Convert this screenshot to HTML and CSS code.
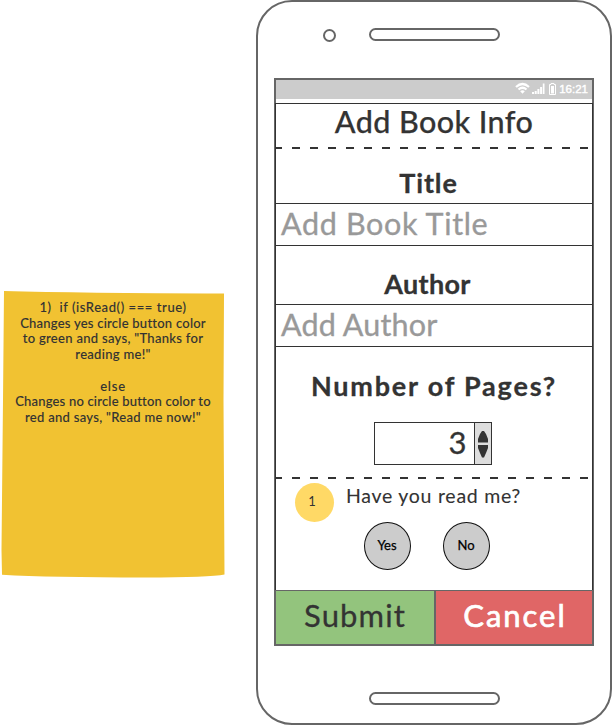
FILE: index.html
```html
<!DOCTYPE html>
<html lang="en">
<head>
<meta charset="utf-8">
<title>Add Book Info</title>
<link rel="stylesheet" href="styles.css">
</head>
<body>
<main class="board">
  <aside class="note">
    <svg class="paper" viewBox="0 0 225 290" aria-hidden="true"><path d="M4 1Q80 3 224 3.500L223.500 110L224.500 284.500Q210 287.500 145 287.500Q50 287.500 2 284.800L1.500 260L3 110Z" fill="#f1c232"/></svg>
    <div class="note-text">
      <p class="n1">1)&nbsp; if (isRead() === true)</p>
      <p class="n2">Changes yes circle button color</p>
      <p class="n3">to green and says, "Thanks for</p>
      <p class="n4">reading me!"</p>
      <p class="n5">else</p>
      <p class="n6">Changes no circle button color to</p>
      <p class="n7">red and says, "Read me now!"</p>
    </div>
  </aside>
  <section class="phone">
    <div class="top"><span class="camera"></span><span class="pill"></span></div>
    <div class="screen">
      <div class="status">
        <svg width="42" height="14" viewBox="0 0 42 14" fill="none" aria-hidden="true">
          <path d="M1 5Q7.500 -1 14 5M3.500 7.500Q7.500 4 11.500 7.500" stroke="#fff" stroke-width="2.200"/>
          <path d="M5.200 9.200Q7.500 7.300 9.800 9.200L7.500 11.700Z" fill="#fff"/>
          <path d="M17 10h2v2h-2zM19.700 9h2v3h-2zM22.400 7h2v5h-2zM25.100 5h2v7h-2zM27.800 1.500h1.700v10.500h-1.700z" fill="#fff"/>
          <path d="M36 1.500h3v1h1.500v10h-6v-10h1.500z" stroke="#fff"/>
          <path d="M36 4h3v7.500h-3z" fill="#fff"/>
        </svg>
        <span class="time">16:21</span>
      </div>
      <div class="form">
        <h1><span>Add Book Info</span></h1>
        <svg class="dash" width="318" height="2" aria-hidden="true"><path d="M-1 1H316" stroke="#333" stroke-width="2" stroke-dasharray="8 10"/></svg>
        <h2 class="title-label"><span>Title</span></h2>
        <div class="field"><span class="book">Add Book Title</span></div>
        <h2 class="author-label"><span>Author</span></h2>
        <div class="field"><span class="writer">Add Author</span></div>
        <h2 class="pages-label"><span>Number of Pages?</span></h2>
        <div class="stepper">
          <span class="value">3</span>
          <span class="arrows"><svg width="16" height="41" viewBox="0 0 16 41" fill="#333" aria-hidden="true"><path d="M7 8h2l2 3 2 5v3.500H3V16l2-5zM3 22h10v3l-2 5-2 4.500H7L5 30l-2-5z"/></svg></span>
        </div>
        <svg class="dash" width="318" height="2" aria-hidden="true"><path d="M-1 1H316" stroke="#333" stroke-width="2" stroke-dasharray="8 10"/></svg>
        <div class="question"><span class="badge">1</span><span class="ask">Have you read me?</span></div>
        <div class="choices"><span class="choice">Yes</span><span class="choice">No</span></div>
      </div>
      <div class="actions">
        <div class="submit"><span>Submit</span></div>
        <div class="cancel"><span>Cancel</span></div>
      </div>
    </div>
    <span class="pill home"></span>
  </section>
</main>
</body>
</html>
```
FILE: styles.css
```css
* { box-sizing: border-box; }
body { margin: 0; background: #fff; color: #333; font-family: Lato, "Open Sans", sans-serif; overflow: hidden; }
h1, h2, p { margin: 0; font-weight: 500; white-space: nowrap; }
.board { display: flex; width: 612px; height: 725px; }
.note { position: relative; width: 225px; height: 290px; margin: 290px 31px 0 0; flex: none; }
.paper { position: absolute; inset: 0; width: 225px; height: 290px; }
.note-text { position: relative; padding-top: 10px; padding-left: 1px; font-size: 13px; line-height: 15.7px; text-align: center; -webkit-text-stroke: .1px #333; letter-spacing: .3px; }
.n1 { letter-spacing: .58px; }
.n2 { letter-spacing: .24px; }
.n5 { margin-top: 15.7px; letter-spacing: .8px; }
.n6 { letter-spacing: .19px; }
.phone { width: 356px; height: 725px; flex: none; border: 2px solid #666; border-radius: 36px; display: flex; flex-direction: column; align-items: center; }
.top { height: 76px; width: 100%; display: flex; align-items: flex-start; padding: 26px 0 0 65px; }
.camera { width: 13px; height: 13px; border: 2px solid #666; border-radius: 50%; margin: 1px 33px 0 0; }
.pill { display: block; width: 131px; height: 13px; border: 2px solid #666; border-radius: 7px; flex: none; }
.screen { width: 320px; height: 568px; border: 2px solid #666; flex: none; }
.status { height: 19px; margin-bottom: 4px; background: #ccc; display: flex; justify-content: flex-end; align-items: center; gap: 3px; padding-right: 4px; color: #fff; }
.status svg { position: relative; top: -.5px; left: 1px; }
.time { font-family: "Liberation Sans", sans-serif; font-size: 11.500px; line-height: 19px; -webkit-text-stroke: .4px #fff; }
.form { height: 487px; border: solid #333; border-width: 1px 1px 0; margin: 0 -1px; display: flex; flex-direction: column; align-items: center; }
h1 { height: 43px; line-height: 35px; font-size: 30.500px; letter-spacing: .42px; -webkit-text-stroke: .25px #333; }
.dash { flex: none; }
h2 { font-size: 27px; font-weight: 700; flex: none; -webkit-text-stroke: .3px #333; }
.title-label { height: 54px; line-height: 68px; letter-spacing: .9px; padding-right: 11px; }
.author-label { height: 58px; line-height: 76px; letter-spacing: .3px; padding-right: 13px; }
.pages-label { height: 75px; line-height: 78px; letter-spacing: 1.8px; }
.field { width: 100%; height: 43px; border: solid #333; border-width: 1px 0; padding-left: 5px; line-height: 39px; font-size: 30.500px; color: #999; flex: none; white-space: nowrap; -webkit-text-stroke: .35px #999; }
.book { letter-spacing: .65px; }
.writer { letter-spacing: .15px; }
.stepper { width: 118px; height: 43px; border: 1px solid #333; display: flex; margin-bottom: 12px; flex: none; margin-right: 3px; }
.value { flex: 1; text-align: right; padding-right: 7px; line-height: 39px; font-size: 31px; -webkit-text-stroke: .3px #333; }
.arrows { width: 17px; border-left: 1px solid #333; background: #ddd; }
.question { height: 43px; width: 100%; display: flex; align-items: flex-start; padding: 4px 0 0 19px; flex: none; }
.badge { width: 39px; height: 39px; border-radius: 50%; background: #ffd966; font-size: 13px; line-height: 37px; text-align: center; padding-right: 5px; }
.ask { margin-left: 12px; font-size: 19.500px; line-height: 26px; white-space: nowrap; letter-spacing: .73px; -webkit-text-stroke: .1px #333; }
.choices { display: flex; gap: 32px; margin-right: 15px; }
.choice { width: 47px; height: 48px; border: 1px solid #111; border-radius: 50%; background: #ccc; color: #000; text-align: center; line-height: 45px; font-size: 13px; -webkit-text-stroke: .25px #000; }
.actions { height: 54px; border-top: 1px solid #666; display: flex; font-size: 31px; line-height: 49px; text-align: center; }
.submit { width: 160px; background: #93c47d; border-right: 2px solid #666; letter-spacing: 1.1px; -webkit-text-stroke: .3px #333; }
.cancel { flex: 1; background: #e06666; color: #fff; letter-spacing: 2px; padding-left: 2px; -webkit-text-stroke: .7px #fff; }
.home { margin-top: 46px; }
```
